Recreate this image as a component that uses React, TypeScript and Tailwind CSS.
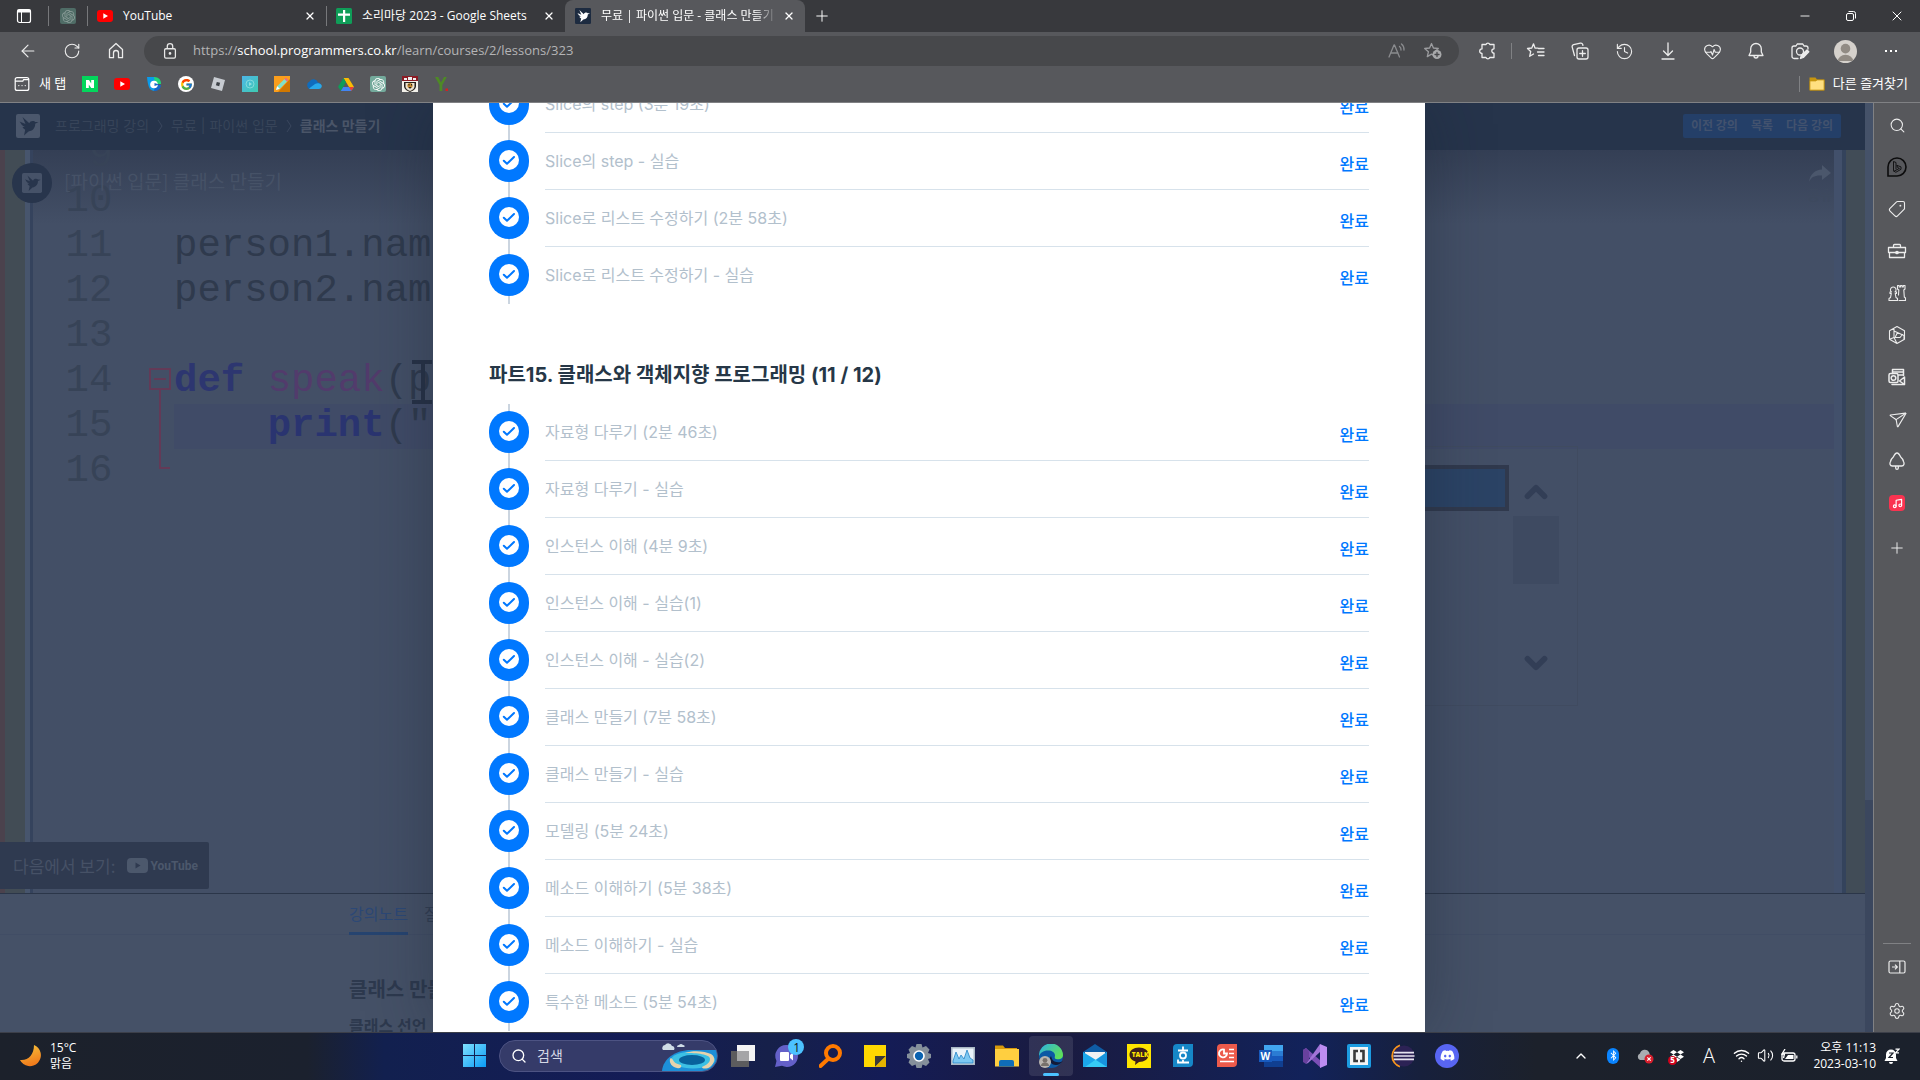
import React from "react";
import {
  ArrowLeft, RotateCw, X, Plus, Minus, Search, Tag, Settings, History, HeartPulse,
  Send, Wifi, Volume2, ChevronUp, ChevronDown, Music,
} from "lucide-react";
import { FcGoogle } from "react-icons/fc";
import { FaDiscord, FaBluetoothB, FaDropbox } from "react-icons/fa";
import { SiOpenai } from "react-icons/si";

type P = { className?: string };

/* ---------- brand marks ---------- */

const YouTubeMark = ({ className = "w-4 h-4" }: P) => (
  <svg viewBox="0 0 16 16" className={className}>
    <rect x="0" y="2" width="16" height="12" rx="3" fill="#f00" />
    <path d="M6.3 5.3v5.4L11 8z" fill="#fff" />
  </svg>
);

const Bird = ({ className = "w-6 h-6", bg, fg }: P & { bg: string; fg: string }) => (
  <svg viewBox="0 0 24 24" className={className}>
    <rect width="24" height="24" rx="2" fill={bg} />
    <path
      fill={fg}
      d="M3.500 7.500 9.500 10 6.500 3l6.800 6.200c.5-1.500 1.800-2.300 3.400-2.300 1.200 0 2 .4 2.500 1L22.500 8l-3.300 1.700c0 3.800-2 6.600-5.200 7.300l-1.500.4L8 21.500l1.200-5.800c-1.300-.6-2.200-1.500-2.700-2.700l2.300-.2c-2.300-1-3.900-2.500-4.300-4z"
    />
  </svg>
);

const Sheets = () => (
  <svg viewBox="0 0 16 16" className="h-4 w-4">
    <rect width="16" height="16" rx="1.500" fill="#0f9d58" />
    <path d="M7 2h2.200v3.500H14v2.200H9.200V14H7V7.700H2V5.500h5z" fill="#fff" />
  </svg>
);

const Gpt = ({ className = "bg-[#74aa9c] text-white" }: P) => (
  <span className={`flex h-4 w-4 items-center justify-center rounded-xs ${className}`}>
    <SiOpenai size={13} />
  </span>
);

/* ---------- browser chrome ---------- */

const CloseTab = ({ label }: { label: string }) => (
  <button aria-label={label} className="flex h-6 w-6 shrink-0 items-center justify-center text-white">
    <X size={12} strokeWidth={2.500} />
  </button>
);

const TabStrip = () => (
  <div className="flex h-8 items-stretch bg-[#38393d] text-xs text-white">
    <button aria-label="탭 작업 메뉴" className="flex w-12 items-center justify-center">
      <svg viewBox="0 0 16 16" className="h-4 w-4" fill="none" stroke="#fff">
        <rect x="1.500" y="1.500" width="13" height="13" rx="2" strokeWidth="1.200" />
        <path d="M1.500 3h13" strokeWidth="3" />
        <path d="M5.500 4v10" />
      </svg>
    </button>
    <span className="my-auto h-5 w-px bg-[#77787b]" />
    <button aria-label="ChatGPT" className="flex w-[38px] items-center justify-center">
      <Gpt className="bg-[#4f6c66] text-[#8a9c98]" />
    </button>
    <span className="my-auto h-5 w-px bg-[#77787b]" />
    <div className="flex w-[238px] items-center pr-1 pl-[9px]">
      <YouTubeMark />
      <span className="ml-[10px] flex-1">YouTube</span>
      <CloseTab label="YouTube 닫기" />
    </div>
    <span className="my-auto h-5 w-px bg-[#77787b]" />
    <div className="flex w-[238px] items-center pr-1 pl-[9px]">
      <Sheets />
      <span className="ml-[10px] flex-1 whitespace-nowrap">소리마당 2023 - Google Sheets</span>
      <CloseTab label="소리마당 닫기" />
    </div>
    <div className="flex w-[240px] items-center rounded-t-lg bg-[#57585c] pr-1 pl-[10px]">
      <Bird className="h-4 w-4 shrink-0" bg="#1d2b40" fg="#fff" />
      <span className="ml-[10px] flex-1 overflow-hidden whitespace-nowrap [mask-image:linear-gradient(to_right,#000_88%,transparent)]">
        무료 | 파이썬 입문 - 클래스 만들기
      </span>
      <CloseTab label="현재 탭 닫기" />
    </div>
    <button aria-label="새 탭" className="flex w-[34px] items-center justify-center">
      <Plus size={18} strokeWidth={1.300} />
    </button>
    <div className="ml-auto flex">
      <button aria-label="최소화" className="flex w-[46px] items-center justify-center">
        <Minus size={14} strokeWidth={1.500} />
      </button>
      <button aria-label="이전 크기로" className="flex w-[46px] items-center justify-center">
        <svg viewBox="0 0 12 12" className="h-3 w-3" fill="none" stroke="#fff">
          <rect x="1.500" y="3.500" width="7" height="7" rx="1.500" />
          <path d="M3.500 1.500h5a2 2 0 0 1 2 2v5" />
        </svg>
      </button>
      <button aria-label="닫기" className="flex w-[46px] items-center justify-center">
        <X size={16} strokeWidth={1.500} />
      </button>
    </div>
  </div>
);

const Tool = ({ label, children }: { label: string; children: React.ReactNode }) => (
  <button aria-label={label} className="flex h-8 w-11 items-center justify-center text-[#ececec]">
    {children}
  </button>
);

const Line = ({ children, className = "h-5 w-5", sw = 1.300 }: P & { children: React.ReactNode; sw?: number }) => (
  <svg viewBox="0 0 20 20" className={className} fill="none" stroke="currentColor" strokeWidth={sw} strokeLinecap="round" strokeLinejoin="round">
    {children}
  </svg>
);

const STAR = "M8.500 2.500 10.400 7l4.900.5-3.700 3.300 1.100 4.800-4.200-2.500-4.200 2.500 1.100-4.800L1.700 7.500 6.600 7z";

const Toolbar = () => (
  <div className="flex h-[38px] items-center bg-[#57585c] pl-[6px]">
    <Tool label="뒤로"><ArrowLeft size={20} strokeWidth={1.400} /></Tool>
    <Tool label="새로 고침"><RotateCw size={18} strokeWidth={1.500} /></Tool>
    <Tool label="홈">
      <Line><path d="M3.500 8.500 10 2.500l6.500 6v8.200h-4V12a2.500 2.500 0 0 0-5 0v4.700h-4z" /></Line>
    </Tool>
    <div className="ml-[6px] flex h-[30px] flex-1 items-center rounded-full bg-[#47484b] pr-2 pl-4">
      <svg viewBox="0 0 20 20" className="h-[18px] w-5" fill="none" stroke="#e8e8e8" strokeWidth="1.400">
        <rect x="4" y="7.500" width="12" height="10.500" rx="1.500" />
        <path d="M7 7.500V4.700a3 3 0 0 1 6 0v2.800" />
        <circle cx="10" cy="12.700" r=".8" fill="#e8e8e8" />
      </svg>
      <div className="ml-[13px] flex-1 text-[13px] text-[#b4b4b6]">
        https://<span className="text-white">school.programmers.co.kr</span>/learn/courses/2/lessons/323
      </div>
      <button aria-label="소리내어 읽기" className="flex w-9 justify-center text-[#8b8c8f]">
        <Line><path d="M2 16 7 4h.5l5 12M4 12h7" /><path d="M12.500 5.500a4 4 0 0 1 1.500 3.500M14.500 3a7 7 0 0 1 2.500 6" /></Line>
      </button>
      <button aria-label="즐겨찾기에 추가" className="flex w-9 justify-center text-[#9b9c9f]">
        <Line><path d={STAR} /><circle cx="14" cy="13.500" r="4.500" fill="#a8a9ab" stroke="none" /><path d="M14 11.500v4M12 13.500h4" stroke="#47484b" /></Line>
      </button>
    </div>
    <div className="ml-[6px] flex items-center">
      <Tool label="확장">
        <Line><path d="M6 3.500h3a2 2 0 0 1 3.800 0H17v4.300a2 2 0 0 0 0 4.400v4.300h-4.200a2 2 0 0 1-3.800 0H5v-4a2.300 2.300 0 1 1 0-4.600V3.500z" /></Line>
      </Tool>
      <span className="mx-0.5 h-4 w-px bg-[#808184]" />
      <Tool label="즐겨찾기">
        <Line><path d="M12 7.200 9 7 7.500 2.800 5.800 7l-4.300.500 3.200 3-1 4.800L7.500 13M12.500 7.500H18M11.500 11H18M12.500 14.500H18" /></Line>
      </Tool>
      <Tool label="컬렉션">
        <Line><rect x="7" y="7" width="11" height="11" rx="2" /><path d="M12.500 9.700v5.600M9.700 12.500h5.600M4.500 14.500 2.200 6.200a2 2 0 0 1 1.400-2.500l6.800-1.600a2 2 0 0 1 2.300 1.300l.2 1" /></Line>
      </Tool>
      <Tool label="검색 기록"><History size={19} strokeWidth={1.400} /></Tool>
      <Tool label="다운로드"><Line><path d="M10 2v12M5.500 10l4.500 4.500 4.500-4.500M4 18h12" /></Line></Tool>
      <Tool label="성능"><HeartPulse size={19} strokeWidth={1.400} /></Tool>
      <Tool label="알림">
        <Line><path d="M10 2.500a5.300 5.300 0 0 0-5.300 5.300V11L3 14.500h14L15.300 11V7.800A5.300 5.300 0 0 0 10 2.500zM8 15a2 2 0 0 0 4 0" /></Line>
      </Tool>
      <Tool label="웹 캡처">
        <Line><path d="M8 17.500H4a2 2 0 0 1-2-2V7a2 2 0 0 1 2-2h2l1.200-2h5.600L14 5h2a2 2 0 0 1 2 2v1" /><circle cx="10" cy="10.500" r="3.500" /><path d="m10.500 17.500.8-3L17 9l1.800 1.800-5.500 5.700z" fill="currentColor" /></Line>
      </Tool>
      <button aria-label="프로필" className="mx-[12px] h-[23px] w-[23px] overflow-hidden rounded-full bg-[#d5d1cc]">
        <svg viewBox="0 0 24 24"><circle cx="12" cy="9" r="5" fill="#918b84" /><path d="M4 22a8 6.500 0 0 1 16 0z" fill="#918b84" /></svg>
      </button>
      <button aria-label="설정 및 기타" className="mr-[7px] flex h-8 w-11 items-center justify-center gap-[3px]">
        <i className="h-0.5 w-0.5 bg-white" /><i className="h-0.5 w-0.5 bg-white" /><i className="h-0.5 w-0.5 bg-white" />
      </button>
    </div>
  </div>
);

const bookmarks: [string, React.ReactNode][] = [
  ["네이버", <svg viewBox="0 0 16 16" className="h-4 w-4"><rect width="16" height="16" fill="#03d65c" /><path d="M4 4h3l2.200 3.500V4H12v8H9.200L6.800 8.500V12H4z" fill="#fff" /></svg>],
  ["유튜브", <YouTubeMark />],
  ["클래스카드", <svg viewBox="0 0 16 16" className="h-4 w-4"><path d="M1 1h8v14C4 15 2 12 1 1z" fill="#0a9bea" /><path d="M8 1c5 0 7 3 7 7h-6z" fill="#1fd67a" /><path d="M15 9c-.5 4-3 6-7 6l1-6z" fill="#1467c8" /><circle cx="8" cy="8.500" r="3.800" fill="#fff" /><path d="M8.500 7 13 8.500 8.500 10z" fill="#1467c8" /></svg>],
  ["Google", <span className="flex h-4 w-4 items-center justify-center rounded-full bg-white"><FcGoogle size={13} /></span>],
  ["Roblox", <svg viewBox="0 0 16 16" className="h-4 w-4"><path d="M4 1 15 4l-3 11L1 12z" fill="#c7cbd1" /><path d="m6.800 6 3.300.8-.9 3.400-3.300-.9z" fill="#3c4046" /></svg>],
  ["강의", <svg viewBox="0 0 16 16" className="h-4 w-4"><defs><linearGradient id="teal" x2="1" y2="1"><stop stopColor="#4db6e8" /><stop offset="1" stopColor="#3fcbb0" /></linearGradient></defs><rect width="16" height="16" fill="url(#teal)" /><circle cx="8" cy="8" r="4" fill="none" stroke="#8fe0e0" strokeWidth=".8" /><path d="M7 6v4l3-2z" fill="#8fe0e0" /></svg>],
  ["노트", <svg viewBox="0 0 16 16" className="h-4 w-4"><path d="M0 0h16v16H0z" fill="#fb9e1c" /><path d="M16 3v13H4z" fill="#d17800" /><path d="m2 14 1.200-3.800L10.500 3 13 5.500 5.800 12.800z" fill="#7fe0c8" /><path d="m2 14 1.200-3.800 2.600 2.600z" fill="#fff" /><path d="m10.500 3 1.300-1.200 2.500 2.500L13 5.500z" fill="#e8688a" /></svg>],
  ["OneDrive", <svg viewBox="0 0 16 16" className="h-4 w-4"><path d="M4 13a4 4 0 0 1-.5-7.500A4.700 4.700 0 0 1 12 6.500 3.300 3.300 0 0 1 12.500 13z" fill="#0f6cbd" /><path d="M3 12.500 9 8c2-1.300 5-1 6.500 1 .8 2-.5 4-3 4H4z" fill="#28a8ea" /></svg>],
  ["Drive", <svg viewBox="0 0 16 16" className="h-4 w-4"><path d="M5.500 2h5L16 11h-5z" fill="#fbbc04" /><path d="M5.500 2 8 6.200 2.800 15 0 10.800z" fill="#0f9d58" /><path d="M5.200 11H16l-2.800 4H2.800z" fill="#4285f4" /><path d="M11 11h5l-2.800 4z" fill="#ea4335" /></svg>],
  ["ChatGPT", <Gpt />],
  ["학교", <svg viewBox="0 0 16 16" className="h-4 w-4"><rect width="16" height="16" fill="#f3f1ea" /><path d="M0 0h16v5H0z" fill="#8c1b24" /><path d="M2 2h3v2H2zm4-1h4v3H6zm5 1h3v2h-3z" fill="#eee" /><path d="M2 6h12v4c0 3-3 5-6 6-3-1-6-3-6-6z" fill="#26211c" /><path d="M3.500 7h9v3.500c0 2-2 3.500-4.500 4.500-2.500-1-4.500-2.500-4.500-4.500z" fill="#e9e2d2" /><circle cx="8" cy="9.500" r="2.600" fill="#c68a2e" /><path d="M6.500 8h1v1.500h-1zm2.500 0h1v1.500H9zM6.500 11h3L8 13z" fill="#26211c" /></svg>],
  ["Y", <svg viewBox="0 0 16 16" className="h-4 w-4"><path d="M1 1h3.200L7 6.500 10 1h2.800L8.300 9v6H5.500V9z" fill="#4e8a25" /><path d="M11.500 12.500H14V15h-2.500z" fill="#d42020" /></svg>],
];

const BookmarkBar = () => (
  <nav className="flex h-8 items-center bg-[#57585c] pb-1 pl-[14px] text-[13px] text-white">
    <a href="#newtab" className="mr-4 flex items-center gap-[9px] whitespace-nowrap">
      <Line className="h-4 w-4" sw={1.500}><rect x="1.500" y="2" width="17" height="16" rx="2.500" /><path d="M2 6.500h9l1-2h6M6 12h.1M10 12h.1M14 12h.1" /></Line>
      새 탭
    </a>
    <div className="flex gap-4">
      {bookmarks.map(([name, icon]) => (
        <a key={name} href="#bookmark" aria-label={name}>{icon}</a>
      ))}
    </div>
    <a href="#others" className="ml-auto flex h-4 items-center gap-2 border-l border-[#808184] pr-3 pl-[9px] whitespace-nowrap">
      <svg viewBox="0 0 16 16" className="h-4 w-4"><path d="M.5 1.500h6l1.500 2h7.500v11H.5z" fill="#c7950f" /><path d="M1 5h6l1-1h7v10H1z" fill="#ffdf80" stroke="#c7950f" strokeWidth=".7" /></svg>
      다른 즐겨찾기
    </a>
  </nav>
);

/* ---------- edge sidebar ---------- */

const sideIcons: [string, React.ReactNode][] = [
  ["검색", <Search size={17} strokeWidth={1.500} />],
  ["Bing", <svg viewBox="0 0 20 20" className="h-5 w-5" fill="none" stroke="#0c0c0d" strokeWidth="1.600"><path d="M1 19V10a9 9 0 1 1 9 9z" /><path d="M6.500 4.500 9 5.500v6.800M6.500 4.500v9.300l2.300 1.500 5.200-3v-2.400L9.800 8.300l.9 2.300 1.700.8-5.700 3" strokeWidth=".9" /></svg>],
  ["쇼핑", <Tag size={18} strokeWidth={1.500} className="rotate-90" />],
  ["도구", <Line><path d="M1.500 6.500h17v5h-17zM2.500 11.500v5h15v-5M6.500 6.500v-2a1 1 0 0 1 1-1h5a1 1 0 0 1 1 1v2" /><circle cx="10" cy="11.500" r="1.200" fill="currentColor" /></Line>],
  ["게임", <Line sw={1.100}><path d="M2 17.500v-2l1.500-1 .8-4H3V9h1.500a2.800 2.800 0 1 1 3.500 0h1.500v1.500H8.200l.8 4 1.500 1v2zM12 17.500h6.500V15L17.300 14l-.5-7L18 6V2.500h-1.700V4h-1.200V2.500h-1.600V4h-1.300V2.500H10.500V6l1.300 1-.3 5" /></Line>],
  ["Microsoft 365", <Line sw={1.100}><path d="m10 1.500 7.500 4.200v8.600L10 18.500l-7.500-4.200V5.700zM7 3.200v9.300l-4.500 1.800M7 6l10 4.500v4M10 18.500l-3-6M8.500 11.500l2-4M8 12.500h5l2.500-3" /></Line>],
  ["Outlook", <Line sw={1.500}><rect x="2" y="6.500" width="9" height="9" rx="1.500" /><circle cx="6.500" cy="11" r="2.300" /><path d="M5.500 6.500V2.500h11v6M5.500 5h11M11.500 8h5M5 17.500h12.500V10l-5 4 5 3.500" /></Line>],
  ["Drop", <Send size={18} strokeWidth={1.500} className="rotate-12" />],
  ["나무", <Line><path d="M10 2c1.200 0 2.500 1.500 3.700 4 1.800 1.500 2.500 3 2.800 4.500 1.200 2 .5 4.500-1.800 4.500H5.300c-2.300 0-3-2.500-1.800-4.500C3.800 9 4.500 7.500 6.300 6 7.500 3.500 8.800 2 10 2zM8.700 15v2a1.300 1.300 0 0 0 2.600 0v-2" /></Line>],
  ["음악", <span className="flex h-4 w-4 items-center justify-center rounded-sm bg-[#fa3350] text-white"><Music size={11} strokeWidth={2.500} /></span>],
];

const Sidebar = () => (
  <aside className="flex w-[47px] shrink-0 flex-col items-center border-l border-[#808184] bg-[#57585c] pt-px text-[#ececec]">
    {sideIcons.map(([name, icon]) => (
      <button key={name} aria-label={name} className="flex h-[42px] w-full items-center justify-center">{icon}</button>
    ))}
    <button aria-label="추가" className="mt-[3px] flex h-[42px] w-full items-center justify-center"><Plus size={18} strokeWidth={1.300} /></button>
    <span className="mt-auto h-px w-7 bg-[#808184]" />
    <button aria-label="사이드바 숨기기" className="flex h-[46px] w-full items-center justify-center">
      <svg viewBox="0 0 18 14" className="h-[14px] w-[18px]" fill="none" stroke="#ececec" strokeWidth="1.200"><rect x="1" y="1" width="16" height="12" rx="1.500" /><path d="M11.800 1v12M4 7h5M7 4.700 9.300 7 7 9.300" /></svg>
    </button>
    <button aria-label="설정" className="flex h-[42px] w-full items-center justify-center"><Settings size={18} strokeWidth={1.400} /></button>
  </aside>
);

/* ---------- dimmed lesson page ---------- */

const Chevron = () => (
  <svg viewBox="0 0 8 14" className="mx-[7px] h-[14px] w-2" fill="none" stroke="#3a475e"><path d="m2 1 4 6-4 6" /></svg>
);

const LessonHeader = () => (
  <header className="flex h-[47px] shrink-0 items-center bg-[#26344b] pr-6 pb-0.5 pl-4 text-sm text-[#374459]">
    <Bird bg="#4b576c" fg="#26344b" />
    <span className="ml-[15px]">프로그래밍 강의</span>
    <Chevron />
    <span>무료 | 파이썬 입문</span>
    <Chevron />
    <b className="text-[#4a5568]">클래스 만들기</b>
    <nav className="ml-auto flex h-6 items-center gap-[13px] rounded-xs bg-[#243f68] px-2 text-xs font-bold text-[#42526e]">
      <a href="#prev">이전 강의</a>
      <a href="#list">목록</a>
      <a href="#next">다음 강의</a>
    </nav>
  </header>
);

const lineNumbers = ["9", "10", "11", "12", "13", "14", "15", "16"];

const Video = () => (
  <section className="relative flex h-[744px] shrink-0 overflow-hidden border-b border-[#2b3649] bg-linear-to-b from-[#343f55] to-[#434f66] to-10% font-[Liberation_Mono] text-[39px]">
    <div className="w-[5px] bg-[#4b424d]" />
    <div className="w-[20px] bg-[#424c55]" />
    <div className="w-[5px] bg-[#47556d]" />
    <div className="w-[3px] bg-[#35435d]" />
    <ol className="-mt-4 w-[112px] text-center leading-[45px] text-[#374357]">
      {lineNumbers.map((n) => (
        <li key={n} className={n === "9" ? "pl-6" : ""}>{n}</li>
      ))}
    </ol>
    <div className="w-[29px] pt-[204px]">
      <svg viewBox="0 0 29 135" className="h-[135px] w-[29px]" fill="none" stroke="#633a57" strokeWidth="2">
        <path d="M5 15h20v20H5zM9 25h12M15 35v79h10" />
      </svg>
    </div>
    <pre className="-mt-4 flex-1 pt-[90px] font-[Liberation_Mono] leading-[45px] text-[#2f3a4d]">
      <div>person1.name</div>
      <div>person2.name</div>
      <div>&nbsp;</div>
      <div><b className="text-[#2d3670]">def</b> <span className="text-[#523b6c]">speak</span>(person)</div>
      <div className="bg-[#404b67]">{"    "}<b className="text-[#2a3470]">print</b>("</div>
      <div>&nbsp;</div>
    </pre>
    <div className="w-2 bg-[#42506b]" />
    <div className="w-1 bg-[#34435c]" />
    <div className="w-[19px] bg-[#414c57]" />

    <div className="absolute top-[11px] left-3 flex items-center gap-3 font-[Noto_Sans_CJK_KR] text-[19px] leading-10 text-[#465267]">
      <span className="flex h-10 w-10 items-center justify-center rounded-full bg-[#28354c]">
        <Bird className="h-5 w-5" bg="#465268" fg="#28354c" />
      </span>
      <a href="#video" className="pb-1">[파이썬 입문] 클래스 만들기</a>
    </div>
    <button className="absolute top-[14px] right-8 flex flex-col items-center font-[Noto_Sans_CJK_KR] text-sm text-[#3d495e]">
      <svg viewBox="0 0 24 20" className="h-5 w-6"><path d="M14 1l9 8-9 7v-4.500C7 11 3 13 1 18 2 10 7 6 14 5.500z" fill="#4b576c" /></svg>
      공유
    </button>
    <svg viewBox="0 0 20 48" className="absolute top-[208px] left-[412px] h-12 w-5" fill="none" stroke="#273247" strokeWidth="4"><path d="M0 4h20M0 44h20M11 4v40" /></svg>
    <div className="absolute top-[296px] right-[287px] flex h-[260px] w-[220px] gap-1 border border-[#404b60] pt-[18px] pr-[18px]">
      <div className="h-[46px] flex-1 border-4 border-[#30394d] bg-[#2b4365]" />
      <div className="flex w-[46px] flex-col items-center text-[#323e56]">
        <ChevronUp size={34} strokeWidth={4} className="mt-[10px]" />
        <span className="mt-[7px] h-[68px] w-full bg-[#3e4a61]" />
        <ChevronDown size={34} strokeWidth={4} className="mt-[62px]" />
      </div>
    </div>
    <a href="#youtube" className="absolute bottom-1 left-0 flex h-[47px] w-[209px] items-center gap-3 rounded-r-xs bg-[#2f3a50] pl-[13px] font-[Noto_Sans_CJK_KR] text-[17px] whitespace-nowrap text-[#465166]">
      다음에서 보기:
      <span className="flex items-center gap-0.5 font-[Roboto] text-xs font-bold text-[#4c586c]">
        <svg viewBox="0 0 21 15" className="h-[15px] w-[21px]"><rect width="21" height="15" rx="4" fill="#4c586c" /><path d="M8.500 4.500v6l5-3z" fill="#2f3a50" /></svg>
        YouTube
      </span>
    </a>
  </section>
);

const Notes = () => (
  <section className="flex-1 overflow-hidden bg-[#455167]">
    <div className="flex h-[41px] gap-4 border-b border-[#414d65] pl-[349px] text-base text-[#323e53]">
      <a href="#note" className="h-[41px] border-b-[3px] border-[#264470] leading-10 text-[#2c4876]">강의노트</a>
      <a href="#qna" className="leading-10">질문</a>
    </div>
    <h1 className="mt-[41px] pl-[349px] text-xl font-bold text-[#2d394e]">클래스 만들기</h1>
    <h2 className="mt-2.5 pl-[349px] text-base font-bold text-[#2d394e]">클래스 선언</h2>
  </section>
);

/* ---------- curriculum dialog ---------- */

const sliceLessons = ["Slice의 step (3분 19초)", "Slice의 step - 실습", "Slice로 리스트 수정하기 (2분 58초)", "Slice로 리스트 수정하기 - 실습"];
const classLessons = [
  "자료형 다루기 (2분 46초)", "자료형 다루기 - 실습", "인스턴스 이해 (4분 9초)", "인스턴스 이해 - 실습(1)",
  "인스턴스 이해 - 실습(2)", "클래스 만들기 (7분 58초)", "클래스 만들기 - 실습", "모델링 (5분 24초)",
  "메소드 이해하기 (5분 38초)", "메소드 이해하기 - 실습", "특수한 메소드 (5분 54초)",
];

const Lessons = ({ items }: { items: string[] }) => (
  <ul>
    {items.map((t) => (
      <li key={t} className="group flex h-[57px]">
        <div className="flex w-10 flex-col items-center">
          <span className="h-[7px] w-0.5 bg-[#cbd5e0]" />
          <span className="flex h-[42px] w-10 justify-center rounded-[20px] bg-[#0078ff] pt-[10px]">
            <svg viewBox="0 0 20 20" className="h-5 w-5"><circle cx="10" cy="10" r="10" fill="#fff" /><path d="m4.800 10.800 3.200 3 7-6.800" fill="none" stroke="#0078ff" strokeWidth="2" strokeLinecap="round" strokeLinejoin="round" /></svg>
          </span>
          <span className="w-0.5 flex-1 bg-[#cbd5e0]" />
        </div>
        <div className="ml-4 flex flex-1 items-center justify-between border-b border-[#d7e2eb] text-base text-[#b2c0cc] group-last:border-transparent">
          <a href="#lesson">{t}</a>
          <span className="pt-1.5 font-medium text-[#0078ff]">완료</span>
        </div>
      </li>
    ))}
  </ul>
);

const CurriculumDialog = () => (
  <div className="absolute inset-0 flex justify-center overflow-hidden pr-[15px]">
    <div role="dialog" aria-label="커리큘럼" className="w-[992px] shrink-0 bg-white px-14 shadow-[0_0_60px_rgba(25,35,50,0.4)]">
      <div className="-mt-[27px]">
        <Lessons items={sliceLessons} />
      </div>
      <h3 className="mt-[62px] mb-5 text-xl leading-[18px] font-bold text-[#263747]">파트15. 클래스와 객체지향 프로그래밍 (11 / 12)</h3>
      <Lessons items={classLessons} />
    </div>
  </div>
);

/* ---------- taskbar ---------- */

const apps: [string, React.ReactNode][] = [
  ["작업 보기", <svg viewBox="0 0 24 24"><path d="M6 1h18v16H6z" fill="#f4f4f4" /><path d="M0 7h18v16H0z" fill="#5c5c5e" /><path d="M6 7h12v10H6z" fill="#a5a5a7" /></svg>],
  ["채팅", <svg viewBox="0 0 24 24" className="overflow-visible"><path d="M12 1a11 11 0 1 1-5 20.800L0 23l1.500-6A11 11 0 0 1 12 1z" fill="#6460c8" /><rect x="5" y="8" width="9" height="9" rx="1" fill="#fff" /><path d="m15 11 3-2.500v8L15 14z" fill="#fff" /><circle cx="21" cy="3" r="8" fill="#4cc2ff" /><text x="18.200" y="7.500" fontSize="12" fill="#111" fontFamily="Open Sans">1</text></svg>],
  ["검색 도구", <svg viewBox="0 0 24 24" fill="none" stroke="#ff7a00"><circle cx="14" cy="9" r="7" strokeWidth="4" /><path d="m9 15-7.500 7" strokeWidth="4" strokeLinecap="round" /></svg>],
  ["스티커 메모", <svg viewBox="0 0 24 24"><path d="M1 1h22v22H1z" fill="#ffd800" /><path d="M12 12h11L12 23z" fill="#3b3a39" /><path d="M23 12v11H12z" fill="#e5b400" /></svg>],
  ["설정", <svg viewBox="0 0 24 24"><path d="m9.500 0 5 0 1 3.500 3.500-1.500 3.500 3.500L21 9l3 1v4l-3 1 1.500 3.500L19 22l-3.500-1.500-1 3.500h-5l-1-3.500L5 22l-3.500-3.500L3 15l-3-1v-4l3-1-1.500-3.500L5 2l3.500 1.500z" fill="#85909b" /><circle cx="12" cy="12" r="5.800" fill="#fff" /><circle cx="12" cy="12" r="4.200" fill="#0b63b0" /></svg>],
  ["성능 모니터", <svg viewBox="0 0 24 24"><path d="M0 3h24v18H0z" fill="#a9b8c4" /><path d="M1.500 4.500h21v15h-21z" fill="#e9f3fa" /><path d="M2 17l3-9 3 7 2-4 3 4 3-9 3 8 3 2v3H2z" fill="#7cc8f2" stroke="#2584c7" strokeWidth=".8" /></svg>],
  ["파일 탐색기", <svg viewBox="0 0 24 24"><path d="M0 1.500h8l2 2.500h12v5H0z" fill="#d89a0c" /><path d="M0 5h24v17.500H0z" fill="#ffcf40" /><path d="M4 22.500V18a2 2 0 0 1 2-2h11a2 2 0 0 1 2 2v4.500z" fill="#0f6db8" /></svg>],
  ["Edge", <svg viewBox="0 0 24 24"><defs><linearGradient id="edge" x2="1" y2=".6"><stop stopColor="#2baee8" /><stop offset="1" stopColor="#5fe05a" /></linearGradient></defs><circle cx="12" cy="12" r="12" fill="#0c59a4" /><path d="M0 12a12 12 0 0 1 24-1c0 4-4 5-7 4-2-.8-1-2-1-3.500 0-3-3-5-7-5-5 0-8 2.500-9 5.500z" fill="url(#edge)" /><path d="M24 17c-3 2-9 2-11-2l-1-3c-3 4 0 9 5 9 3 0 5-2 7-4z" fill="#131a38" /><circle cx="6" cy="18" r="6" fill="#b9b5b0" /><circle cx="6" cy="16.300" r="2.400" fill="#77716b" /><path d="M2 22a4 3.500 0 0 1 8 0z" fill="#77716b" /></svg>],
  ["메일", <svg viewBox="0 0 24 24"><path d="M0 8 12 0l12 8v15H0z" fill="#0f5ca5" /><path d="M2 8h20v10H2z" fill="#f2f2f2" /><path d="M0 8l13 8-9 7H0z" fill="#1ba7ea" /><path d="M24 8 2 23h22z" fill="#36cbf5" /><path d="m24 8-11 8 11 7z" fill="#1793dd" /></svg>],
  ["카카오톡", <svg viewBox="0 0 24 24"><path d="M0 0h24v24H0z" fill="#fee500" /><path d="M12 3.500c5.500 0 9.500 3 9.500 7.300s-4 7.200-9.500 7.200l-4 3 .5-3.500C5 16.500 2.500 14 2.500 10.800 2.500 6.500 6.500 3.500 12 3.500z" fill="#3b1e1e" /><text x="4.700" y="13.200" fontSize="6.500" fontWeight="800" fill="#fee500" fontFamily="Open Sans">TALK</text></svg>],
  ["한글", <svg viewBox="0 0 24 24"><path d="M6 0h16v19a4 4 0 0 1-4 4H2V4a4 4 0 0 1 4-4z" fill="#1687c7" /><path d="M12 2.500v3M7 6.500h10M7 15.500v3h11M12 16v2" stroke="#fff" fill="none" strokeWidth="1.800" /><circle cx="12" cy="11.500" r="3" fill="none" stroke="#fff" strokeWidth="1.800" /></svg>],
  ["한쇼", <svg viewBox="0 0 24 24"><path d="M6 0h16v19a4 4 0 0 1-4 4H2V4a4 4 0 0 1 4-4z" fill="#ec5a4b" /><path d="M14 5.500h5M14 9.500h5M14 13.500h5M5 17.500h14" stroke="#fff" strokeWidth="1.600" /><path d="M9 5.500a4 4 0 1 0 3 4H9z" fill="none" stroke="#fff" strokeWidth="1.800" /></svg>],
  ["Word", <svg viewBox="0 0 24 24"><path d="M5 1h19v6H5z" fill="#41a5ee" /><path d="M5 7h19v5H5z" fill="#2b7cd3" /><path d="M5 12h19v5H5z" fill="#185abd" /><path d="M5 17h19v6H5z" fill="#103f91" /><path d="M0 6h13v12H0z" fill="#185abd" /><text x="1.500" y="15.500" fontSize="10" fontWeight="700" fill="#fff" fontFamily="Open Sans">W</text></svg>],
  ["Visual Studio", <svg viewBox="0 0 24 24"><path d="m0 6 3-2L18 17v7L0 8z" fill="#7b4fb5" /><path d="M0 6l3-2 3 4v8l-3 4-3-2z" fill="#68419e" /><path d="M3 20 17 0v8L5 19z" fill="#a274d8" /><path d="m17 0 7 3v18l-7 3z" fill="#bd8df2" /></svg>],
  ["Brackets", <svg viewBox="0 0 24 24"><rect width="24" height="24" rx="2" fill="#1c9be0" /><path d="M3 3h18v18H3z" fill="#f5f5f5" /><path d="M11 7H7.500v10H11M13 7h3.500v10H13" fill="none" stroke="#3a3a3a" strokeWidth="2.600" /></svg>],
  ["Eclipse", <svg viewBox="0 0 24 24"><path d="M9 1.500a11 11 0 0 0 0 21" fill="none" stroke="#f7941e" strokeWidth="2" /><circle cx="13" cy="12" r="10.500" fill="#2c2255" /><path d="M3 8.700h20M2.500 12h21M3 15.300h20" stroke="#e6e3ee" strokeWidth="1.700" /></svg>],
  ["Discord", <span className="flex h-6 w-6 items-center justify-center rounded-full bg-[#5865f2] text-white"><FaDiscord size={15} /></span>],
];

const Taskbar = () => (
  <footer className="relative flex h-12 shrink-0 items-center border-t border-[#3c3f49] bg-[linear-gradient(90deg,#1c212b_0%,#1b212e_16%,#12204f_20%,#141c56_33%,#16204a_40%,#141c56_46%,#1a1b40_55%,#12225a_68%,#17203c_74%,#1c212b_80%,#1b212c_100%)] pb-0.5 text-xs text-white">
    <button className="flex w-[456px] items-center gap-[7px] pl-[19px] text-left leading-4">
      <svg viewBox="0 0 24 24" className="h-6 w-6"><defs><linearGradient id="moon" x2=".3" y2="1"><stop stopColor="#f7c63c" /><stop offset="1" stopColor="#f07c1c" /></linearGradient></defs><path d="M15 1a11 11 0 1 1-14 15c8 1 14-5 14-15z" fill="url(#moon)" /></svg>
      <span>15°C<br />맑음</span>
    </button>
    <button aria-label="시작" className="w-[37px] pl-[7px]">
      <svg viewBox="0 0 23 23" className="h-[23px] w-[23px]"><defs><linearGradient id="win" x2="1" y2="1"><stop stopColor="#7fe0ff" /><stop offset="1" stopColor="#0a9bf5" /></linearGradient></defs><path d="M0 0h11v11H0zM12 0h11v11H12zM0 12h11v11H0zM12 12h11v11H12z" fill="url(#win)" /></svg>
    </button>
    <label className="ml-[6px] flex h-8 w-[219px] items-center overflow-hidden rounded-full border border-[#4d5383] bg-[#353b69] pl-[11px]">
      <Search size={16} strokeWidth={2} />
      <input type="text" aria-label="검색" placeholder="검색" className="ml-[10px] w-[124px] bg-transparent text-sm placeholder:text-[#d5d8e6]" />
      <svg viewBox="0 0 56 30" className="h-[30px] w-14 shrink-0">
        <path d="M1 30C2 18 14 9 30 9h26v16l-6 5z" fill="#1d8fd8" />
        <ellipse cx="32" cy="19" rx="22" ry="8.500" fill="#3cc0e4" />
        <path d="M9 18c0-1 2-1 3 1s3 4 8 5c1 2-1 4-4 3-5-1-8-5-7-9zM24 12c8-3 20-2 26 1 5 3 4 9-1 13-3 2-8 2-8 0 4-2 8-4 8-8 0-5-13-6-25-6z" fill="#e6d3ac" />
        <ellipse cx="31" cy="19" rx="13" ry="5" fill="#08629c" />
        <path d="M2 9a3 3 0 0 1 2-5 4 4 0 0 1 7 1 2.500 2.500 0 0 1 2 4zM16 6a2 2 0 0 1 2-2 3 3 0 0 1 4 0c2 0 2 2 1 2z" fill="#cfdde6" />
      </svg>
    </label>
    <div className="ml-[3px] flex">
      {apps.map(([name, icon]) => (
        <button
          key={name}
          aria-label={name}
          className={name === "Edge"
            ? "relative flex h-10 w-11 items-center justify-center rounded bg-white/10 after:absolute after:bottom-0 after:h-[3px] after:w-4 after:rounded-full after:bg-[#4cc2ff]"
            : "flex h-10 w-11 items-center justify-center"}
        >
          <span className="block h-6 w-6">{icon}</span>
        </button>
      ))}
    </div>
    <div className="ml-auto flex items-center">
      <button aria-label="숨겨진 아이콘" className="flex w-8 justify-center"><ChevronUp size={16} strokeWidth={2} /></button>
      <button aria-label="Bluetooth" className="flex w-8 justify-center"><span className="flex h-4 w-3 items-center justify-center rounded-full bg-[#0a84ff]"><FaBluetoothB size={11} /></span></button>
      <button aria-label="OneDrive" className="flex w-8 justify-center">
        <svg viewBox="0 0 17 16" className="h-4 w-[17px]"><path d="M3 12a3.500 3.500 0 0 1 0-6.500A5 5 0 0 1 12 4l2 6-2 2z" fill="#a9adb1" /><circle cx="12" cy="11" r="4.500" fill="#d81e2c" /><path d="m10.300 9.300 3.400 3.400m0-3.400-3.400 3.400" stroke="#fff" strokeWidth="1.200" /></svg>
      </button>
      <button aria-label="Dropbox" className="relative flex w-8 justify-center"><FaDropbox size={14} /><span className="absolute bottom-[-2px] left-[7px] flex h-[9px] w-[9px] items-center justify-center rounded-full bg-[#d0021b] text-[8px] font-bold">5</span></button>
      <button className="w-8 text-center text-xl font-light">A</button>
      <button aria-label="네트워크, 소리, 배터리" className="flex w-20 items-center justify-center gap-[7px]">
        <Wifi size={17} strokeWidth={2} />
        <Volume2 size={17} strokeWidth={1.500} />
        <svg viewBox="0 0 17 14" className="h-[14px] w-[17px]" fill="none" stroke="#fff" strokeWidth="1.300"><rect x="1" y="4" width="13" height="8" rx="2" /><path d="M15.800 6.500v3" /><path d="M7 6h5.500v4H4z" fill="#fff" stroke="none" /><path d="M4 0 1 5h2.500L2.500 9" /></svg>
      </button>
      <button className="w-[71px] text-right leading-4">오후 11:13<br />2023-03-10</button>
      <button aria-label="알림" className="mr-5 ml-2 flex">
        <svg viewBox="0 0 16 16" className="h-4 w-4">
          <path d="M7 1.500a5 5 0 0 0-5 5V10l-1.500 3h13L12 10V6.500a5 5 0 0 0-5-5zM5 14h4a2 2 0 0 1-4 0z" fill="#fff" />
          <path d="M5 5h4L5 9.500h4" fill="none" stroke="#1b212c" strokeWidth="1.200" />
          <path d="M10.500 0H16v6h-4z" fill="#1b212c" />
          <path d="M11.500 1.200H15l-3.500 3.600H15" fill="none" stroke="#fff" strokeWidth="1.200" />
        </svg>
      </button>
    </div>
  </footer>
);

export default function App() {
  return (
    <div className="flex h-screen w-full flex-col overflow-hidden font-['Open_Sans','Noto_Sans_CJK_KR',sans-serif]">
      <TabStrip />
      <Toolbar />
      <BookmarkBar />
      <div className="flex min-h-0 flex-1 border-t border-[#808184]">
        <main className="relative flex min-w-0 flex-1 font-['Inter','Noto_Sans_CJK_KR',sans-serif]">
          <div className="flex min-w-0 flex-1 flex-col">
            <LessonHeader />
            <Video />
            <Notes />
          </div>
          <div className="w-2 bg-linear-to-b from-[#455269] from-75% to-[#3b475e] to-75%" />
          <CurriculumDialog />
        </main>
        <Sidebar />
      </div>
      <Taskbar />
    </div>
  );
}
